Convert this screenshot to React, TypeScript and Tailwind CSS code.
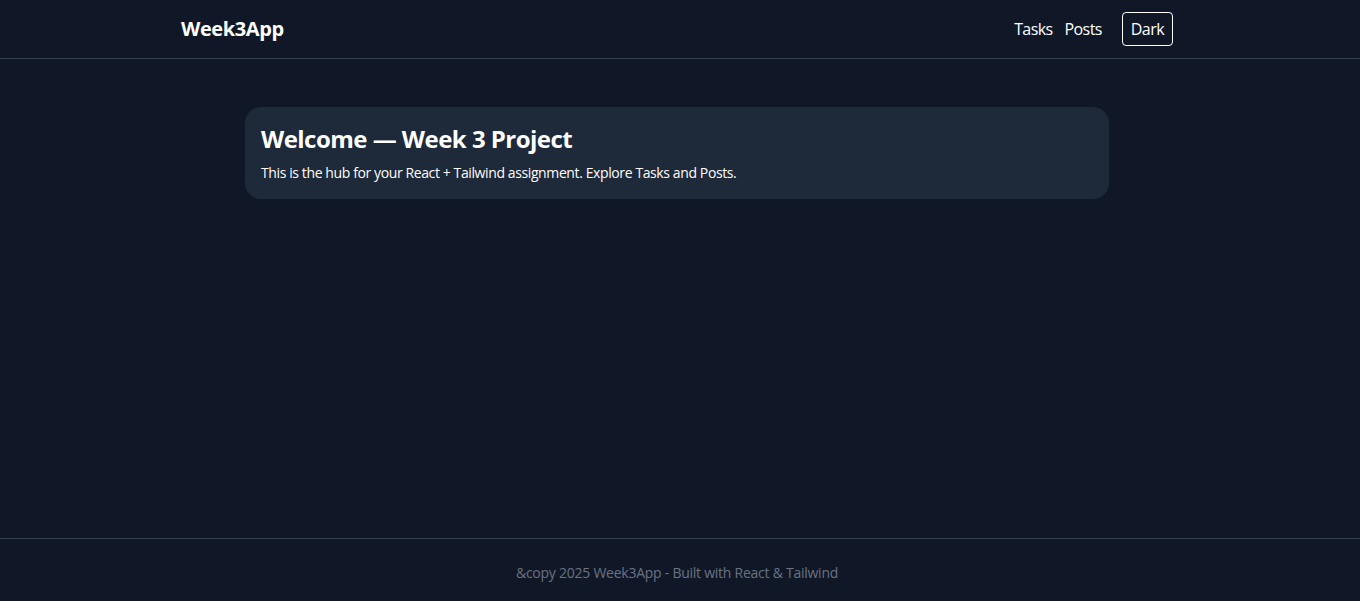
import React from "react";

const Header: React.FC = () => {
  return (
    <header className="border-b border-gray-700 pr-[6px]">
      <div className="max-w-5xl mx-auto px-4 py-3 flex items-center justify-between">
        <a href="#" className="text-xl font-bold text-white tracking-[-0.02em]">
          Week3App
        </a>
        <nav className="flex items-center">
          <div className="flex gap-3 text-white tracking-[-0.037em]">
            <a href="#">Tasks</a>
            <a href="#">Posts</a>
          </div>
          <button className="ml-5 px-2 py-1 border border-white rounded text-white tracking-[-0.035em]">
            Dark
          </button>
        </nav>
      </div>
    </header>
  );
};

const Footer: React.FC = () => {
  return (
    <footer className="border-t border-gray-700 pr-[6px]">
      <div className="max-w-5xl mx-auto px-4 pt-6 pb-[18px] text-center text-sm text-gray-500 tracking-[-0.018em]">
        &amp;copy 2025 Week3App - Built with React &amp; Tailwind
      </div>
    </footer>
  );
};

export default function App() {
  return (
    <div
      className="min-h-screen flex flex-col bg-gray-900 text-white"
      style={{ fontFamily: '"Open Sans", sans-serif' }}
    >
      <Header />
      <main className="flex-1 pr-[6px]">
        <div className="max-w-4xl mx-auto px-4 py-12">
          <section className="bg-gray-800 rounded-2xl p-4">
            <h1 className="text-2xl font-bold mb-2 tracking-[-0.022em]">
              Welcome — Week 3 Project
            </h1>
            <p className="text-sm tracking-[-0.028em]">
              This is the hub for your React + Tailwind assignment. Explore Tasks and Posts.
            </p>
          </section>
        </div>
      </main>
      <Footer />
    </div>
  );
}
